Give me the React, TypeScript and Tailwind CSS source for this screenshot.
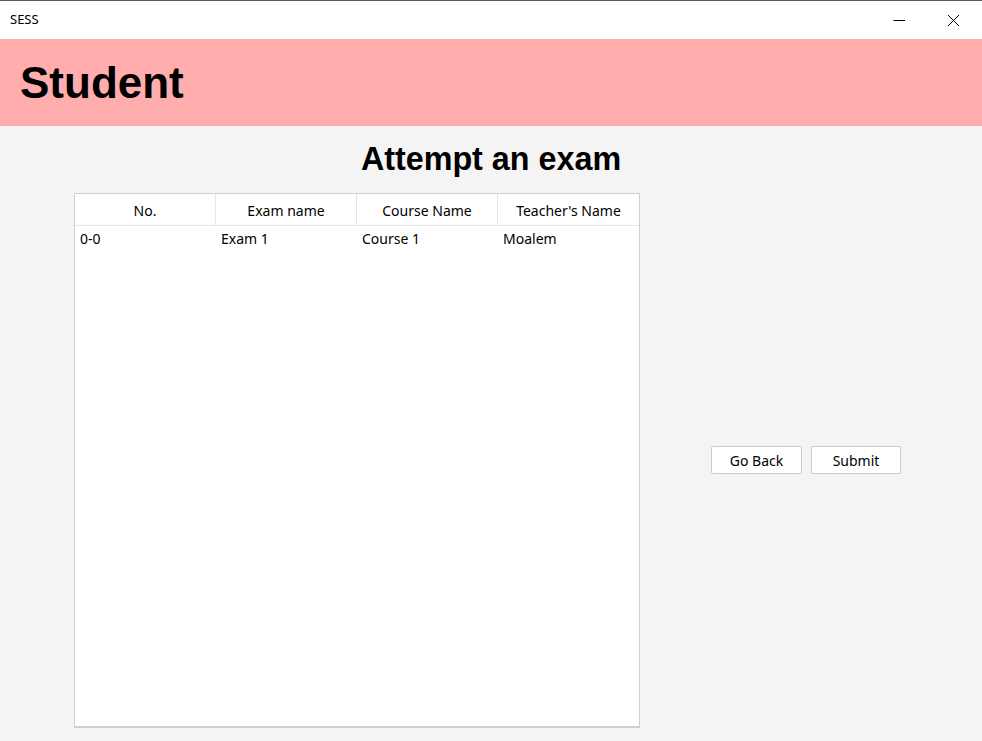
export default function App() {
  const cols = ["No.", "Exam name", "Course Name", "Teacher's Name"];
  const row = ["0-0", "Exam 1", "Course 1", "Moalem"];
  return (
    <div className="w-[982px] h-[741px] bg-[#f4f4f4] flex flex-col overflow-hidden" style={{ fontFamily: '"Segoe UI", "Noto Sans", sans-serif' }}>
      <div className="h-[39px] bg-white border-t border-[#5c5c5c] flex items-center pl-[10px] shrink-0">
        <span className="text-[13px] text-black flex-1">SESS</span>
        <div className="flex items-center h-full pr-[6px]">
          <div className="w-[46px] h-full flex items-center justify-center">
            <svg width="12" height="12" viewBox="0 0 12 12"><path d="M0.5 6.5h12" stroke="#000" strokeWidth="1" /></svg>
          </div>
          <div className="w-[8px]" />
          <div className="w-[46px] h-full flex items-center justify-center">
            <svg width="13" height="13" viewBox="0 0 13 13"><path d="M1 1l11 11M12 1L1 12" stroke="#000" strokeWidth="1" /></svg>
          </div>
        </div>
      </div>
      <div className="h-[87px] bg-[#ffadad] flex items-center pl-[20px] shrink-0">
        <h1 className="text-[44px] font-bold text-black leading-none" style={{ fontFamily: '"Liberation Sans", Arial, sans-serif' }}>Student</h1>
      </div>
      <div className="flex justify-center pt-[17px] h-[67px] shrink-0">
        <h2 className="text-[32.3px] font-bold text-black leading-none" style={{ fontFamily: '"Liberation Sans", Arial, sans-serif' }}>Attempt an exam</h2>
      </div>
      <div className="flex items-center">
        <div className="ml-[74px] w-[566px] h-[535px] bg-white border border-[#cfcfcf] border-b-2 flex flex-col">
          <div className="grid grid-cols-4 h-[32px] border-b border-[#e5e5e5]">
            {cols.map((c, i) => (
              <div key={c} className={`flex items-center justify-center pt-[2px] text-[14px] text-black ${i < 3 ? "border-r border-[#e5e5e5]" : ""}`}>{c}</div>
            ))}
          </div>
          <div className="grid grid-cols-4 h-[24px]">
            {row.map((c) => (
              <div key={c} className="flex items-center pl-[5px] text-[14px] text-black">{c}</div>
            ))}
          </div>
        </div>
        <div className="ml-[71px] flex gap-[9px] mb-[1px]">
          <button className="w-[91px] h-[28px] bg-white border border-[#cccccc] rounded-[2px] text-[14px] text-black">Go Back</button>
          <button className="w-[90px] h-[28px] bg-white border border-[#cccccc] rounded-[2px] text-[14px] text-black">Submit</button>
        </div>
      </div>
    </div>
  );
}
